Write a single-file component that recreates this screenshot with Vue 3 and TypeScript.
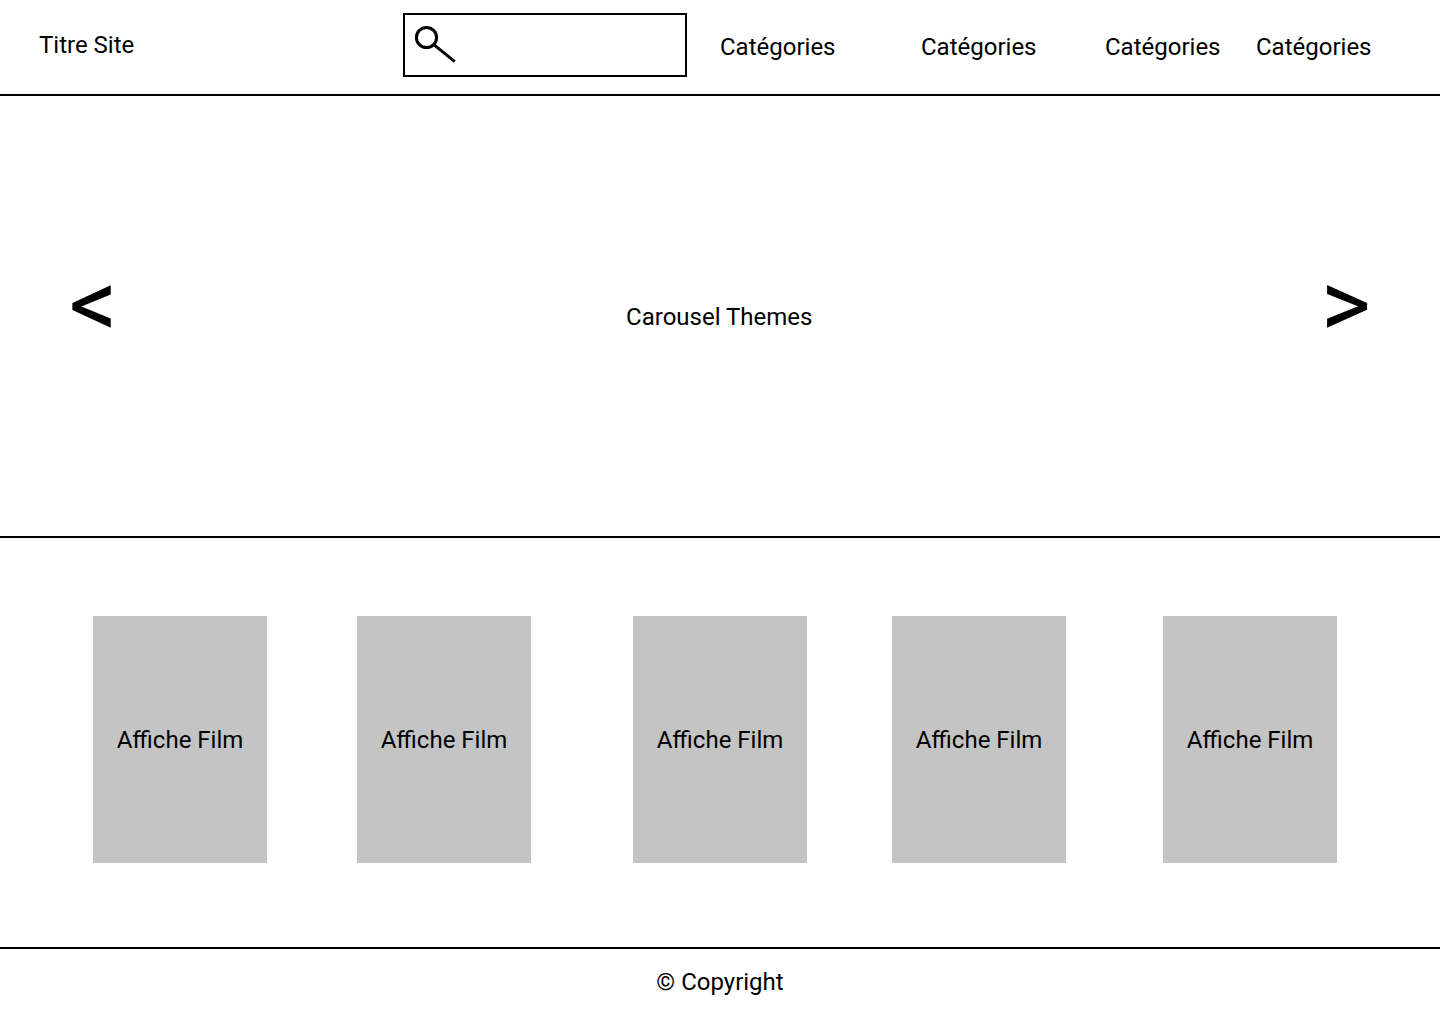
<script setup lang="ts">
import { ref } from 'vue'

interface Item {
  id: number
  label: string
}

const query = ref<string>('')

const categories: Item[] = [1, 2, 3, 4].map((id) => ({ id, label: 'Catégories' }))
const posters: Item[] = [1, 2, 3, 4, 5].map((id) => ({ id, label: 'Affiche Film' }))
</script>

<template>
  <div class="page">
    <header class="header">
      <a class="title" href="#">Titre Site</a>
      <form class="search" role="search" @submit.prevent>
        <label class="search-label" for="search">
          <svg class="search-icon" viewBox="0 0 42 38" role="img" aria-label="Rechercher">
            <circle cx="12.5" cy="12.5" r="10.1" />
            <path d="M19.8 19.6 40.8 36.6" />
          </svg>
        </label>
        <input id="search" v-model="query" class="search-input" type="search" />
      </form>
      <nav class="nav" aria-label="Navigation principale">
        <a v-for="category in categories" :key="category.id" href="#">{{ category.label }}</a>
      </nav>
    </header>

    <main>
      <section class="carousel" aria-label="Thèmes">
        <button class="arrow" type="button" aria-label="Précédent">&lt;</button>
        <p class="carousel-text">Carousel Themes</p>
        <button class="arrow" type="button" aria-label="Suivant">&gt;</button>
      </section>

      <ul class="posters">
        <li v-for="poster in posters" :key="poster.id" class="poster">{{ poster.label }}</li>
      </ul>
    </main>

    <footer class="footer">© Copyright</footer>
  </div>
</template>

<style>
body {
  margin: 0;
  background: #fff;
}
</style>

<style scoped>
.page {
  font-family: Roboto, "Liberation Sans", sans-serif;
  font-size: 24px;
  line-height: 28px;
  color: #000;
}

.header {
  display: grid;
  grid-template-columns: 364fr 317fr 720fr;
  align-items: center;
  padding: 13px 0 17px 39px;
  border-bottom: 2px solid #000;
}

.header a {
  color: inherit;
  text-decoration: none;
}

.search {
  display: flex;
  box-sizing: border-box;
  min-width: 0;
  height: 64px;
  margin-right: 33px;
  border: 2px solid #000;
}

.search-label {
  flex: none;
  padding: 10px 9px;
}

.search-icon {
  display: block;
  width: 42px;
  height: 38px;
  fill: none;
  stroke: #000;
  stroke-width: 3;
}

.search-input {
  flex: 1;
  width: 0;
  min-width: 0;
  padding: 0 8px 0 0;
  border: 0;
  outline: 0;
  background: transparent;
  font: inherit;
}

.nav {
  display: grid;
  grid-template-columns: 201fr 184fr 151fr 184fr;
  padding-top: 4px;
}

.carousel {
  display: flex;
  align-items: center;
  justify-content: space-between;
  box-sizing: border-box;
  height: 442px;
  padding: 2px 69px 0;
  border-bottom: 2px solid #000;
}

.carousel-text {
  flex: 1;
  margin: 0;
  text-align: center;
}

.arrow {
  padding: 0 0 26px;
  border: 0;
  background: none;
  color: inherit;
  font: inherit;
  font-size: 96px;
  line-height: 112px;
  cursor: pointer;
}

.posters {
  display: grid;
  grid-template-columns: 264fr 276fr 259fr 271fr 277fr;
  margin: 0;
  padding: 78px 0 84px 93px;
  border-bottom: 2px solid #000;
  list-style: none;
}

.poster {
  display: flex;
  align-items: center;
  justify-content: center;
  width: 174px;
  height: 247px;
  background: #c4c4c4;
}

.footer {
  padding: 19px 0 28px;
  text-align: center;
}
</style>
